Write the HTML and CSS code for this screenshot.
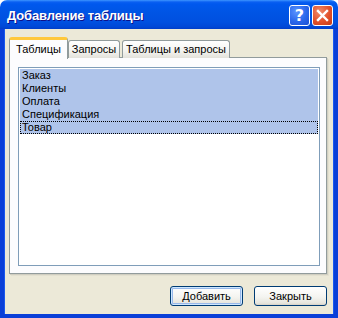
FILE: index.html
```html
<!DOCTYPE html>
<html>
<head>
<meta charset="utf-8">
<link rel="stylesheet" href="styles.css">
</head>
<body>
<div class="window">
  <div class="titlebar">
    <span class="title">Добавление таблицы</span>
    <div class="tbtns">
      <div class="tbtn help">?</div>
      <div class="tbtn close">
        <svg width="13" height="13" viewBox="0 0 13 13"><path d="M2 2 L11 11 M11 2 L2 11" stroke="#fff" stroke-width="2.4" stroke-linecap="square"/></svg>
      </div>
    </div>
  </div>
  <div class="frame">
    <div class="tabs">
      <div class="tab active">Таблицы</div>
      <div class="tab">Запросы</div>
      <div class="tab">Таблицы и запросы</div>
    </div>
    <div class="panel">
      <div class="list">
        <div class="row sel">Заказ</div>
        <div class="row sel">Клиенты</div>
        <div class="row sel">Оплата</div>
        <div class="row sel">Спецификация</div>
        <div class="row sel focus">Товар</div>
      </div>
    </div>
    <div class="buttons">
      <div class="btn default">Добавить</div>
      <div class="btn">Закрыть</div>
    </div>
  </div>
</div>
</body>
</html>
```
FILE: styles.css
```css
* { box-sizing: border-box; }
html, body { margin: 0; padding: 0; background: #ffffff; }
.window {
  width: 338px;
  height: 318px;
  display: flex;
  flex-direction: column;
  font-family: "Liberation Sans", Arial, sans-serif;
  font-size: 11px;
  color: #000;
}
.titlebar {
  height: 29px;
  flex: none;
  display: flex;
  align-items: center;
  justify-content: space-between;
  padding: 0 5px 0 7px;
  border-radius: 7px 7px 0 0;
  background: linear-gradient(to bottom, #3d95ff 0px, #0a5ff2 2px, #0058ee 4px, #0055e5 12px, #0050e0 22px, #0047d6 27px, #003dc8 29px);
}
.title {
  color: #fff;
  font-weight: bold;
  font-size: 13px;
  letter-spacing: -0.15px;
  text-shadow: 1px 1px 0 #0f1089;
  margin-top: 1px;
}
.tbtns { display: flex; gap: 2px; margin-top: 1px; }
.tbtn {
  width: 21px;
  height: 21px;
  border: 1px solid #fff;
  border-radius: 3px;
  display: flex;
  align-items: center;
  justify-content: center;
  color: #fff;
}
.help {
  background: radial-gradient(circle at 35% 30%, #5a95ff 0%, #2a67eb 55%, #1b4fd4 100%);
  font-family: "DejaVu Sans", sans-serif;
  font-weight: bold;
  font-size: 16px;
}
.close {
  background: radial-gradient(circle at 35% 30%, #f08c6c 0%, #e2512b 55%, #c43a16 100%);
}
.frame {
  flex: 1;
  background: #ece9d8;
  border-left: 4px solid #0a3fd8;
  border-right: 4px solid #0a3fd8;
  border-bottom: 4px solid #0a3fd8;
  box-shadow: inset 1px 0 0 #1a58ef, inset -1px 0 0 #1a58ef;
  padding: 8px 0 0 5px;
  display: flex;
  flex-direction: column;
}
.tabs {
  display: flex;
  align-items: flex-end;
  height: 21px;
  position: relative;
  z-index: 2;
  margin-bottom: -1px;
}
.tab {
  height: 18px;
  padding: 0;
  line-height: 16px;
  text-align: center;
  white-space: nowrap;
  border: 1px solid #919b9c;
  border-bottom: none;
  border-radius: 3px 3px 0 0;
  background: linear-gradient(to bottom, #ffffff 0%, #f3f3ef 60%, #e3e2db 100%);
  margin-left: 2px;
}
.tab.active {
  width: 59px;
  margin-left: 0;
  line-height: 19px;
  background: #fcfcfe;
  border-color: #e68b2c #919b9c #919b9c #919b9c;
  border-top: 3px solid #ffc83c;
  height: 22px;
  margin-bottom: -1px;
}
.tab:nth-child(2) { margin-left: 0; width: 52px; }
.tab:nth-child(3) { width: 108px; }
.panel {
  width: 318px;
  height: 217px;
  background: #fcfcfe;
  border: 1px solid #919b9c;
  box-shadow: 1px 1px 0 #d0cec1, 2px 2px 0 #e3e0d0;
  padding: 9px 6px 7px 8px;
  display: flex;
}
.list {
  flex: 1;
  background: #fff;
  border: 1px solid #7f9db9;
  padding: 1px;
}
.row {
  height: 13px;
  line-height: 13px;
  padding-left: 2px;
}
.row.sel { background: #afc4ea; }
.row.focus { outline: 1px dotted #000; outline-offset: -1px; }
.buttons {
  display: flex;
  justify-content: flex-end;
  gap: 11px;
  padding: 12px 7px 0 0;
}
.btn {
  width: 73px;
  height: 20px;
  border: 1px solid #003c74;
  border-radius: 3px;
  background: linear-gradient(to bottom, #ffffff 0%, #f4f4f0 55%, #e6e5dd 90%, #d6d0c5 100%);
  display: flex;
  align-items: center;
  justify-content: center;
}
.btn.default {
  box-shadow: inset 0 0 0 1px #cee7ff, inset 0 0 0 2px #98b8ea;
}
```
